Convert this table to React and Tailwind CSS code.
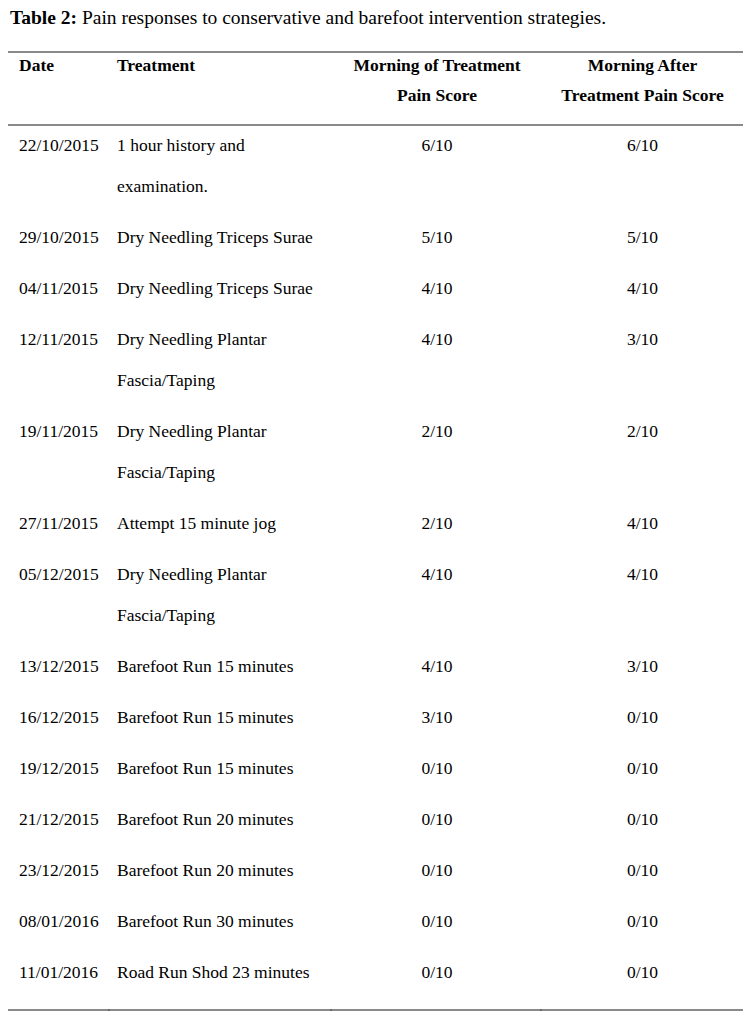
const rows = [
  ['22/10/2015', ['1 hour history and', 'examination.'], '6/10', '6/10'],
  ['29/10/2015', ['Dry Needling Triceps Surae'], '5/10', '5/10'],
  ['04/11/2015', ['Dry Needling Triceps Surae'], '4/10', '4/10'],
  ['12/11/2015', ['Dry Needling Plantar', 'Fascia/Taping'], '4/10', '3/10'],
  ['19/11/2015', ['Dry Needling Plantar', 'Fascia/Taping'], '2/10', '2/10'],
  ['27/11/2015', ['Attempt 15 minute jog'], '2/10', '4/10'],
  ['05/12/2015', ['Dry Needling Plantar', 'Fascia/Taping'], '4/10', '4/10'],
  ['13/12/2015', ['Barefoot Run 15 minutes'], '4/10', '3/10'],
  ['16/12/2015', ['Barefoot Run 15 minutes'], '3/10', '0/10'],
  ['19/12/2015', ['Barefoot Run 15 minutes'], '0/10', '0/10'],
  ['21/12/2015', ['Barefoot Run 20 minutes'], '0/10', '0/10'],
  ['23/12/2015', ['Barefoot Run 20 minutes'], '0/10', '0/10'],
  ['08/01/2016', ['Barefoot Run 30 minutes'], '0/10', '0/10'],
  ['11/01/2016', ['Road Run Shod 23 minutes'], '0/10', '0/10'],
]

const cols = 'grid grid-cols-[102px_222px_210px_201px]'

export default function App() {
  return (
    <div className="min-h-[1026px] w-[750px] bg-white font-['Liberation_Serif',serif] text-[17.5px] text-black">
      <p className="px-[10px] pt-[6px] text-[19.5px] leading-[24px]">
        <span className="font-bold">Table 2:</span> Pain responses to conservative and barefoot intervention strategies.
      </p>

      <div className="ml-[8px] mt-[21px] w-[735px]">
        <div className={`${cols} border-y-2 border-[#8a8a8a] pb-[17px] font-bold leading-[24px]`}>
          <div className="pl-[11px]">Date</div>
          <div className="pl-[7px]">Treatment</div>
          <div className="flex flex-col gap-[6px] text-center">
            <div>Morning of Treatment</div>
            <div>Pain Score</div>
          </div>
          <div className="flex flex-col gap-[6px] text-center">
            <div>Morning After</div>
            <div>Treatment Pain Score</div>
          </div>
        </div>

        <div className="-mt-[1px]">
          {rows.map(([date, treatment, before, after]) => (
            <div key={date} className={`${cols} pb-[10px] leading-[41px]`}>
              <div className="pl-[11px]">{date}</div>
              <div className="pl-[7px]">
                {treatment.map((line) => (
                  <div key={line}>{line}</div>
                ))}
              </div>
              <div className="text-center">{before}</div>
              <div className="text-center">{after}</div>
            </div>
          ))}
        </div>

        <div className={`${cols} mt-[6px] h-[2px] bg-[#8a8a8a]`}>
          <div className="border-r-2 border-[#6a6a6a]" />
          <div className="border-r-2 border-[#6a6a6a]" />
          <div className="border-r-2 border-[#6a6a6a]" />
          <div />
        </div>
      </div>
    </div>
  )
}
